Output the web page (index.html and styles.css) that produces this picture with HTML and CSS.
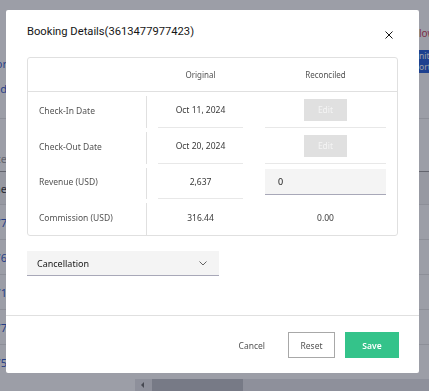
FILE: index.html
```html
<!DOCTYPE html>
<html lang="en">
<head>
    <meta charset="UTF-8">
    <title>Booking Details</title>
    <link rel="stylesheet" href="styles.css">
</head>
<body>
    <div class="page">
        <div class="page-head">
            <div class="edge-left">
                <span class="link">Vendor</span>
                <span class="link">Brand</span>
            </div>
            <div class="page-fill"></div>
            <div class="edge-right">
                <span class="alert">low</span>
                <span class="badge">nit<br>ort</span>
            </div>
        </div>
        <div class="page-row filter-row">
            <div class="edge-left"><span class="muted">Date</span></div>
        </div>
        <div class="page-row head-row">
            <div class="edge-left"><span>Name</span></div>
        </div>
        <div class="page-row"><div class="edge-left"><span class="link">3613477</span></div></div>
        <div class="page-row"><div class="edge-left"><span class="link">3613476</span></div></div>
        <div class="page-row"><div class="edge-left"><span class="link">3613471</span></div></div>
        <div class="page-row"><div class="edge-left"><span class="link">3613477</span></div></div>
        <div class="page-row last"><div class="edge-left"><span class="link">3613475</span></div></div>
        <div class="hscroll">
            <span class="hscroll-arrow"></span>
            <span class="hscroll-thumb"></span>
        </div>
    </div>

    <div class="overlay">
        <div class="modal">
            <div class="modal-header">
                <h2 class="modal-title">Booking Details(3613477977423)</h2>
                <button class="close-btn" aria-label="Close">
                    <svg width="8" height="8" viewBox="0 0 8 8" fill="none" stroke="#161616" stroke-width="1">
                        <line x1="0.5" y1="0.5" x2="7.5" y2="7.5"></line>
                        <line x1="7.5" y1="0.5" x2="0.5" y2="7.5"></line>
                    </svg>
                </button>
            </div>

            <div class="modal-body">
                <div class="recon-table">
                    <div class="recon-row recon-head">
                        <div class="cell-label"></div>
                        <div class="cell">Original</div>
                        <div class="cell">Reconciled</div>
                    </div>
                    <div class="recon-row">
                        <div class="cell-label"><span>Check-In Date</span></div>
                        <div class="cell">Oct 11, 2024</div>
                        <div class="cell"><button class="edit-btn" disabled>Edit</button></div>
                    </div>
                    <div class="recon-row">
                        <div class="cell-label"><span>Check-Out Date</span></div>
                        <div class="cell">Oct 20, 2024</div>
                        <div class="cell"><button class="edit-btn" disabled>Edit</button></div>
                    </div>
                    <div class="recon-row">
                        <div class="cell-label"><span>Revenue (USD)</span></div>
                        <div class="cell">2,637</div>
                        <div class="cell cell-input"><input class="text-input" type="text" value="0"></div>
                    </div>
                    <div class="recon-row last">
                        <div class="cell-label"><span>Commission (USD)</span></div>
                        <div class="cell">316.44</div>
                        <div class="cell">0.00</div>
                    </div>
                </div>

                <div class="select">
                    <span>Cancellation</span>
                    <svg width="8" height="5" viewBox="0 0 8 5" fill="none" stroke="#525252" stroke-width="0.9">
                        <polyline points="0.5,0.5 4,4 7.5,0.5"></polyline>
                    </svg>
                </div>
            </div>

            <div class="modal-footer">
                <button class="btn-ghost">Cancel</button>
                <button class="btn-outline">Reset</button>
                <button class="btn-primary">Save</button>
            </div>
        </div>
    </div>
</body>
</html>
```

FILE: styles.css
```css
* {
    margin: 0;
    padding: 0;
    box-sizing: border-box;
}

html, body {
    width: 100%;
    height: 100%;
    overflow: hidden;
}

body {
    background-color: #fff;
    font-family: "Noto Sans", "Open Sans", sans-serif;
    color: #161616;
}

/* Page behind the dialog */
.page {
    display: flex;
    flex-direction: column;
    height: 391px;
    font-size: 11px;
}

.page-head {
    display: flex;
    height: 119px;
    border-bottom: 1px solid #e0e0e0;
}

.page-fill {
    flex: 1;
}

.edge-left {
    width: 7px;
    display: flex;
    flex-direction: column;
    align-items: flex-end;
    white-space: nowrap;
    overflow: hidden;
}

.page-head .edge-left {
    padding-top: 56px;
    gap: 10px;
}

.edge-right {
    width: 10px;
    display: flex;
    flex-direction: column;
    align-items: flex-start;
    white-space: nowrap;
    overflow: hidden;
    padding-top: 26px;
}

.link {
    color: #0f3fbf;
}

.muted {
    color: #8d8d8d;
}

.alert {
    color: #c0213a;
    font-size: 10px;
    line-height: 14px;
}

.badge {
    margin-top: 10px;
    width: 10px;
    background-color: #0043ce;
    color: #fff;
    font-size: 8.5px;
    line-height: 11px;
    padding: 0 0 1px 0;
}

.page-row {
    display: flex;
    height: 35px;
    align-items: center;
    border-bottom: 1px solid #e0e0e0;
}

.filter-row {
    height: 53px;
    align-items: flex-end;
    padding-bottom: 5px;
    border-bottom-color: #8d8d8d;
}

.head-row {
    height: 33px;
    background-color: #f4f4f4;
}

.page-row.last {
    border-bottom: none;
    height: 34px;
}

.hscroll {
    display: flex;
    align-items: center;
    margin-left: 135px;
    height: 12px;
    background-color: #e3e3e6;
}

.hscroll-arrow {
    width: 0;
    height: 0;
    margin-left: 6px;
    border-top: 3px solid transparent;
    border-bottom: 3px solid transparent;
    border-right: 3px solid #555;
}

.hscroll-thumb {
    margin-left: 8px;
    width: 91px;
    height: 12px;
    background-color: #b4b6bd;
}

/* Dialog */
.overlay {
    position: fixed;
    inset: 0;
    background-color: rgba(57, 62, 80, 0.5);
    padding: 10px 0 0 6px;
}

.modal {
    width: 413px;
    height: 363px;
    background-color: #fff;
    border-radius: 2px;
    display: flex;
    flex-direction: column;
}

.modal-header {
    display: flex;
    align-items: flex-start;
    justify-content: space-between;
    padding: 13px 26px 0 21px;
    height: 47px;
}

.modal-title {
    font-family: Roboto, "Noto Sans", sans-serif;
    font-size: 11.2px;
    font-weight: 400;
    line-height: 18px;
    color: #161616;
}

.close-btn {
    border: none;
    background: none;
    display: flex;
    margin-top: 8px;
}

.modal-body {
    flex: 1;
    padding: 0 21px;
    border-bottom: 1px solid #e0e0e0;
}

.recon-table {
    width: 371px;
    border: 1px solid #e0e0e0;
    border-radius: 3px;
    font-size: 8.5px;
    color: #393939;
}

.recon-row {
    display: grid;
    grid-template-columns: 119px 107px 143px;
    height: 36px;
}

.recon-head {
    height: 34px;
    border-bottom: 1px solid #e0e0e0;
    align-items: center;
    color: #525252;
    font-size: 8px;
}

.recon-row:nth-child(4) {
    height: 35px;
}

.recon-row.last {
    height: 36px;
}

.cell-label {
    display: flex;
    align-items: center;
    padding-left: 11px;
    margin-top: 4px;
    border-right: 1px solid #e0e0e0;
    color: #525252;
}

.recon-head .cell-label {
    border-right: none;
    margin-top: 0;
}

.recon-row .cell-label span {
    margin-top: -4px;
}

.cell {
    display: flex;
    align-items: center;
    justify-content: center;
    margin: 0 11px;
    border-bottom: 1px solid #e8e8e8;
}

.recon-head .cell {
    border-bottom: none;
    margin: 0;
}

.recon-row.last .cell {
    border-bottom: none;
}

.edit-btn {
    width: 43px;
    height: 22px;
    border: none;
    background-color: #e0e0e0;
    color: #f4f4f4;
    font-family: inherit;
    font-size: 8.5px;
}

.cell-input {
    border-bottom: none;
    align-items: flex-end;
}

.text-input {
    width: 100%;
    height: 26px;
    margin-bottom: 4px;
    border: none;
    border-bottom: 1px solid #a8a8b8;
    background-color: #f4f4f4;
    font-family: inherit;
    font-size: 9px;
    color: #161616;
    padding-left: 13px;
    outline: none;
}

.select {
    margin-top: 15px;
    width: 192px;
    height: 25px;
    display: flex;
    align-items: center;
    justify-content: space-between;
    padding: 0 12px 0 10px;
    background-color: #f4f4f4;
    border-bottom: 1px solid #a8a8b8;
    font-size: 9px;
    color: #161616;
}

.modal-footer {
    height: 57px;
    display: flex;
    align-items: flex-start;
    justify-content: flex-end;
    padding: 16px 20px 0 0;
}

.modal-footer button {
    font-family: inherit;
    font-size: 8.5px;
    height: 26px;
    cursor: pointer;
}

.btn-ghost {
    border: none;
    background: none;
    color: #525252;
    margin-right: 23px;
}

.btn-outline {
    width: 47px;
    border: 1px solid #a8a8a8;
    background-color: #fff;
    color: #525252;
    margin-right: 10px;
}

.btn-primary {
    width: 54px;
    border: none;
    background-color: #34c38a;
    color: #fff;
    font-weight: 600;
}
```
